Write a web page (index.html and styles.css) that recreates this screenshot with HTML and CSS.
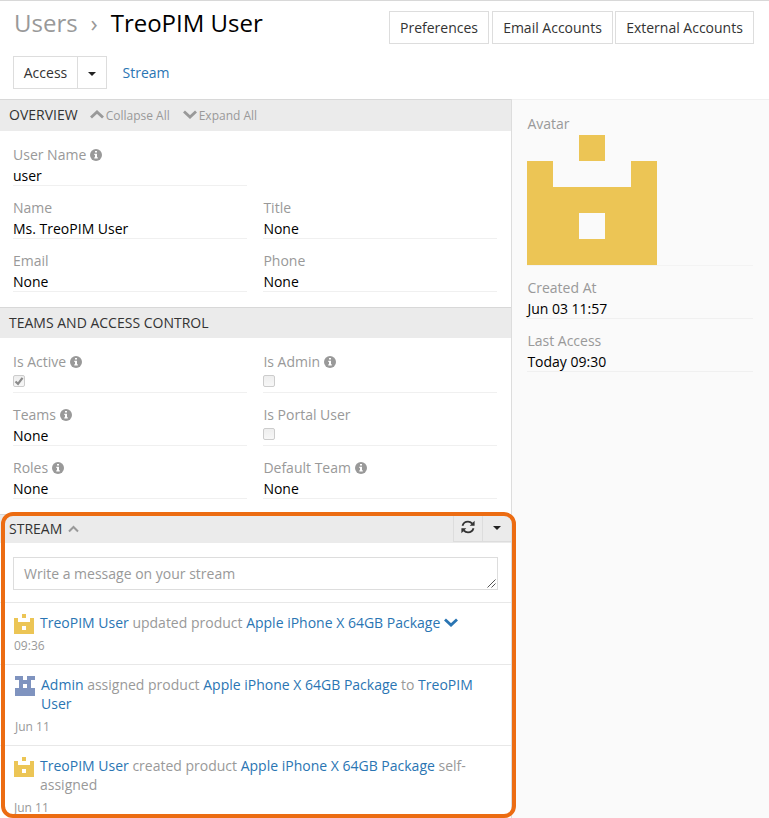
FILE: index.html
```html
<!DOCTYPE html>
<html lang="en">
<head>
<meta charset="utf-8">
<title>TreoPIM User</title>
<link rel="stylesheet" href="styles.css">
</head>
<body>
<svg class="defs" aria-hidden="true">
  <symbol id="info" viewBox="0 0 12 12"><circle cx="6" cy="6" r="6" fill="#999"/><path d="M5 2h2v1.600H5zM4.300 4.800H7v3.500h.8v1.300H4.300V8.300H5V6h-.7z" fill="#fff"/></symbol>
  <symbol id="castle" viewBox="0 0 5 5"><path d="M2 0h1v1H2zM0 1h1v1h3V1h1v4H0zM2 3v1h1V3z" fill="#ecc555" fill-rule="evenodd"/></symbol>
  <symbol id="robot" viewBox="0 0 5 5"><path d="M0 0h2v1h1V0h2v1H4v2h1v2H0V3h1V1H0zM2 2v1h1V2z" fill="#7f93bf" fill-rule="evenodd"/></symbol>
  <symbol id="up" viewBox="0 0 14 9"><path d="M1 7.500L7 1.900l6 5.600" fill="none" stroke="currentColor" stroke-width="2.800"/></symbol>
  <symbol id="down" viewBox="0 0 14 9"><path d="M1 1.500l6 5.600 6-5.600" fill="none" stroke="currentColor" stroke-width="2.800"/></symbol>
</svg>
<div class="page">
  <header class="top">
    <h1><span class="crumb">Users</span><span class="sep">›</span><span class="title">TreoPIM User</span></h1>
    <div class="actions"><a class="btn pref">Preferences</a><a class="btn email">Email Accounts</a><a class="btn ext">External Accounts</a></div>
  </header>
  <div class="toolbar">
    <div class="group"><span class="btn access">Access</span><span class="btn drop"><i class="caret"></i></span></div>
    <a class="link">Stream</a>
  </div>
  <div class="columns">
    <main>
      <section class="overview">
        <div class="head"><span>OVERVIEW</span><span class="toggle"><svg width="14" height="9"><use href="#up"/></svg>Collapse All</span><span class="toggle second"><svg width="14" height="9"><use href="#down"/></svg>Expand All</span></div>
        <div class="fields">
          <div class="cell"><label>User Name <svg class="info"><use href="#info"/></svg></label><div class="value">user</div></div><div></div>
          <div class="cell"><label>Name</label><div class="value">Ms. TreoPIM User</div></div>
          <div class="cell"><label>Title</label><div class="value">None</div></div>
          <div class="cell"><label>Email</label><div class="value">None</div></div>
          <div class="cell"><label>Phone</label><div class="value">None</div></div>
        </div>
      </section>
      <section class="teams">
        <div class="head">TEAMS AND ACCESS CONTROL</div>
        <div class="fields">
          <div class="cell"><label>Is Active <svg class="info"><use href="#info"/></svg></label><div class="value"><span class="check"><svg width="10" height="10" viewBox="0 0 10 10"><path d="M1.500 5.500l2.500 2.300 4.500-6" fill="none" stroke="#8b8b8b" stroke-width="2.200"/></svg></span></div></div>
          <div class="cell"><label>Is Admin <svg class="info"><use href="#info"/></svg></label><div class="value"><span class="check"></span></div></div>
          <div class="cell"><label>Teams <svg class="info"><use href="#info"/></svg></label><div class="value">None</div></div>
          <div class="cell"><label>Is Portal User</label><div class="value"><span class="check"></span></div></div>
          <div class="cell"><label>Roles <svg class="info"><use href="#info"/></svg></label><div class="value">None</div></div>
          <div class="cell"><label>Default Team <svg class="info"><use href="#info"/></svg></label><div class="value">None</div></div>
        </div>
      </section>
      <section class="stream">
        <div class="head"><span>STREAM</span><svg class="fold" width="11" height="8" viewBox="0 0 11 8"><path d="M1 6.500l4.500-4.500L10 6.500" fill="none" stroke="#999" stroke-width="2"/></svg>
          <div class="tools"><span class="tool"><svg class="refresh" width="14" height="14" viewBox="0 0 14 14"><path d="M1.500 5.800C2.300 3 4.500 1.700 7 1.700c1.700 0 3 .6 4.200 1.800M12.500 8.200C11.700 11 9.500 12.300 7 12.300c-1.700 0-3-.6-4.200-1.800" fill="none" stroke="#333" stroke-width="1.800"/><path d="M13.600.8v5H8.700zM.4 13.200v-5h4.900z" fill="#333"/></svg></span><span class="tool"><i class="caret"></i></span></div>
        </div>
        <div class="post"><div class="message">Write a message on your stream<svg class="grip" width="9" height="9" viewBox="0 0 9 9"><path d="M.5 8.500l8-8M4.500 8.500l4-4" stroke="#555" fill="none"/></svg></div></div>
        <article class="first"><svg class="avatar"><use href="#castle"/></svg><p><a>TreoPIM User</a> updated product <a>Apple iPhone X 64GB Package</a> <svg class="more" width="14" height="9"><use href="#down"/></svg></p><time>09:36</time></article>
        <article class="admin"><svg class="avatar"><use href="#robot"/></svg><p><a>Admin</a> assigned product <a>Apple iPhone X 64GB Package</a> to <a>TreoPIM User</a></p><time>Jun 11</time></article>
        <article><svg class="avatar"><use href="#castle"/></svg><p><a>TreoPIM User</a> created product <a>Apple iPhone X 64GB Package</a> self-assigned</p><time>Jun 11</time></article>
      </section>
    </main>
    <aside>
      <div class="cell picture"><label>Avatar</label><svg class="portrait"><use href="#castle"/></svg></div>
      <div class="cell"><label>Created At</label><div class="value">Jun 03 11:57</div></div>
      <div class="cell"><label>Last Access</label><div class="value">Today 09:30</div></div>
    </aside>
  </div>
  <div class="highlight"></div>
</div>
</body>
</html>
```
FILE: styles.css
```css
* { box-sizing: border-box; }
body { margin: 0; overflow: hidden; background: #fff; color: #000; font: 14px/20px "Open Sans", sans-serif; }
.defs { position: absolute; width: 0; height: 0; }
.page { position: relative; width: 769px; height: 818px; overflow: hidden; border-top: 1px solid #d8d8d8; }
.top { display: flex; justify-content: space-between; height: 55px; padding: 10px 15px 0 14px; }
h1 { display: flex; margin: -5px 0 0; font-size: 24px; line-height: 34px; font-weight: 400; }
.crumb, .sep { color: #999; }
.sep { width: 33px; text-align: center; }
.actions { display: flex; }
.btn { display: flex; align-items: center; justify-content: center; height: 33px; border: 1px solid #ddd; background: #fff; color: #333; white-space: nowrap; }
.pref { width: 100px; margin-right: 3px; }
.email { width: 121px; margin-right: 2px; }
.ext { width: 139px; }
.toolbar { display: flex; gap: 15.5px; height: 43px; padding-left: 13px; }
.toolbar .link { line-height: 33px; }
.group { display: flex; }
.access { width: 65px; }
.drop { width: 30px; margin-left: -1px; }
.caret { border: 4px solid transparent; border-top-color: #222; border-bottom: 0; }
.drop .caret { margin-top: 2px; }
.link, a { color: #2a75b3; }
.pref, .email, .ext { color: #333; }
.columns { display: flex; height: 719px; }
main { width: 512px; border-right: 1px solid #ddd; }
.head { display: flex; align-items: center; height: 32px; padding-left: 9px; border-top: 1px solid #d8d8d8; background: #ebebeb; color: #333; }
.overview .head { padding-bottom: 1px; }
.toggle { display: flex; align-items: center; gap: 2px; margin-left: 12px; color: #999; font-size: 12px; padding-top: 1px; }
.toggle svg { margin-top: -3px; }
.second { margin-left: 13px; }
.fields { display: grid; grid-template-columns: 234px 234px; column-gap: 16.4px; row-gap: 12px; padding: 14px 13px 0; }
.cell label { display: block; height: 20px; color: #999; }
.value { height: 21px; border-bottom: 1px solid #f0f0f0; line-height: 21px; }
.overview { height: 208px; }
.teams { height: 207px; }
.teams .head { height: 31px; }
.info { width: 12px; height: 12px; vertical-align: -1px; }
.check { display: block; width: 12px; height: 12px; margin-left: -0.4px; border: 1px solid #ccc; border-radius: 2px; background: linear-gradient(#eee, #f7f7f7); transform: translateY(3px); }
.check svg { display: block; }
.stream .head { height: 29px; }
.fold { margin-left: 6px; }
.tools { display: flex; align-self: flex-start; height: 27px; margin-left: auto; }
.tool { display: flex; align-items: center; justify-content: center; width: 29px; border: 1px solid #ddd; border-width: 0 0 1px 1px; }
.refresh { margin-top: -3px; }
.post { height: 60px; padding: 14px 13px 0; border-bottom: 1px solid #e8e8e8; }
.message { position: relative; height: 33px; padding-left: 10px; border: 1px solid #ddd; color: #999; line-height: 32px; }
.grip { position: absolute; right: 1px; bottom: 1px; }
article { display: grid; grid-template-columns: 20px 1fr; column-gap: 6px; align-content: start; height: 81px; padding: 10px 20px 0 14px; border-bottom: 1px solid #e8e8e8; color: #999; }
article p { margin: 0; line-height: 19px; }
.avatar { width: 20px; height: 20px; margin-top: 1px; }
time { grid-column: 1 / 3; margin-top: 5px; font-size: 12px; line-height: 18px; }
.first { height: 62px; }
.first p { margin-right: -10px; }
.first time { margin-top: 3px; }
.more { color: #2a75b3; vertical-align: 1px; }
.admin { padding-left: 15px; }
aside { flex: 1; padding: 14px 15px 0; border-top: 1px solid #f0f0f0; background: #fafafa; }
aside .cell { width: 226px; margin-bottom: 12px; }
aside .picture { height: 152px; border-bottom: 1px solid #f3f3f3; }
aside label, aside .value { padding-left: 0.4px; }
.portrait { display: block; width: 130px; height: 130px; margin-top: 1px; }
.highlight { position: absolute; left: 1px; top: 511px; width: 515px; height: 306px; border: 4px solid #ec6c12; border-radius: 12px; }
```
